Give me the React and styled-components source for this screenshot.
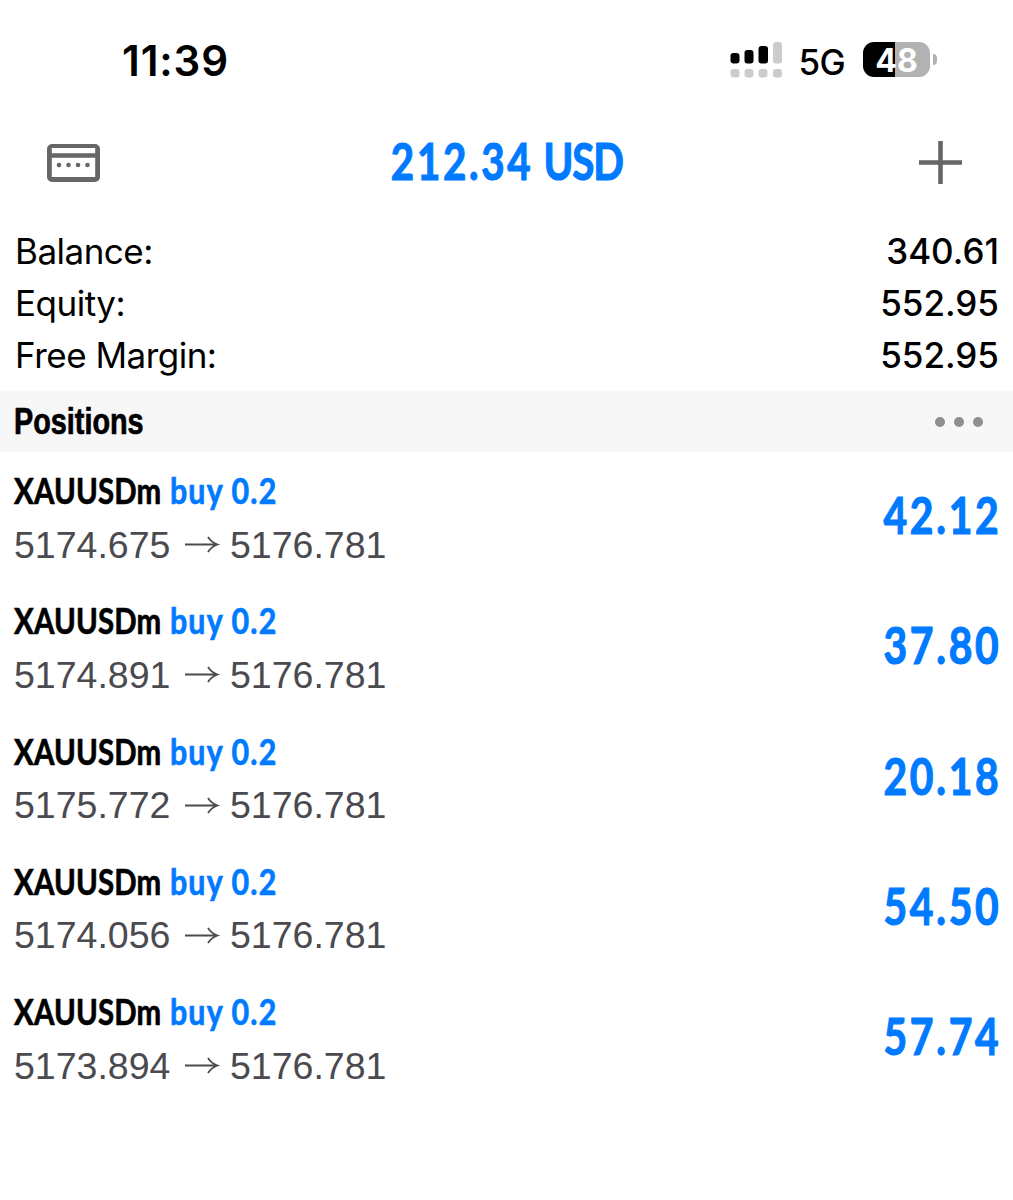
import styled, { createGlobalStyle } from 'styled-components';

const GlobalStyle = createGlobalStyle`
  * {
    box-sizing: border-box;
  }
  body {
    margin: 0;
    background: #fff;
    color: #000;
    font-family: Inter, "Liberation Sans", sans-serif;
  }
`

const Screen = styled.main`
  width: 1013px;
  height: 1200px;
  overflow: hidden;
  background: #fff;
`

const StatusBar = styled.header`
  display: flex;
  align-items: center;
  justify-content: space-between;
  height: 119px;
  padding: 0 76px 0 122px;
`
const Clock = styled.div`
  margin-top: 1px;
  font-size: 42px;
  font-weight: 600;
  letter-spacing: 0.9px;
`
const Indicators = styled.div`
  display: flex;
  align-items: center;
`
const Network = styled.span`
  margin: 4px 18px 0 16px;
  font-size: 35px;
  font-weight: 450;
  letter-spacing: -0.7px;
`
const Battery = styled.div`
  display: flex;
  align-items: center;
`
const BatteryBody = styled.div`
  width: 67px;
  height: 35px;
  border-radius: 11px;
  background: linear-gradient(to right, #000 ${props => props.$level}%, #b2b2b2 ${props => props.$level}%);
  color: #fff;
  font-size: 32px;
  font-weight: 700;
  line-height: 37px;
  text-align: center;
`
const BatteryCap = styled.div`
  width: 4px;
  height: 11px;
  margin-left: 3px;
  border-radius: 0 5px 5px 0;
  background: #b2b2b2;
`

const NavBar = styled.nav`
  display: flex;
  align-items: center;
  justify-content: space-between;
  height: 87px;
  padding: 0 51px 0 47px;
`
const NavButton = styled.button`
  display: flex;
  padding: 0;
  border: 0;
  background: none;
`

// Condensed lettering: the text is squeezed towards one edge of its box
const Condensed = styled.span`
  display: inline-block;
  font-family: Lato, sans-serif;
  font-weight: 700;
  white-space: nowrap;
  transform: scaleX(${props => props.$scale});
  transform-origin: ${props => props.$origin || 'left'} center;
`
const Total = styled(Condensed)`
  margin: 0 6px 5px 0;
  color: #007aff;
  font-size: 51px;
  letter-spacing: 3.4px;
  -webkit-text-stroke: 1.2px #007aff;
`
const Currency = styled.span`
  margin-left: -3px;
  letter-spacing: -1.4px;
`

const Summary = styled.section`
  height: 185px;
  padding: 19px 14px 0 15px;
`
const SummaryRow = styled.div`
  display: flex;
  align-items: center;
  justify-content: space-between;
  height: 52px;
  font-size: 35px;
`
const Label = styled.span`
  letter-spacing: -0.5px;
`
const Amount = styled.span`
  font-weight: 500;
`

const SectionBar = styled.div`
  display: flex;
  align-items: center;
  justify-content: space-between;
  height: 61px;
  padding: 0 30px 0 14px;
  background: #f7f7f7;
`
const SectionTitle = styled(Condensed)`
  font-family: "Liberation Sans", sans-serif;
  font-size: 36px;
  -webkit-text-stroke: 0.7px #000;
`
const Dots = styled.div`
  display: flex;
  gap: 9px;
`
const Dot = styled.i`
  width: 10px;
  height: 10px;
  border-radius: 50%;
  background: #8e8e93;
`

const Position = styled.article`
  display: flex;
  align-items: center;
  justify-content: space-between;
  height: 130.25px;
  padding: 0 14px;
`
const Deal = styled.div`
  display: flex;
  flex-direction: column;
`
const DealHead = styled.div`
  display: flex;
  height: 54px;
  line-height: 54px;
  font-size: 37px;
`
const SymbolBox = styled.div`
  width: 156px;
`
const SymbolName = styled(Condensed)`
  letter-spacing: 0.2px;
  -webkit-text-stroke: 0.7px #000;
`
const Side = styled(Condensed)`
  color: #007aff;
  letter-spacing: 1.4px;
  -webkit-text-stroke: 0.7px #007aff;
`
const Prices = styled.div`
  display: flex;
  align-items: center;
  height: 54px;
  padding-top: 2px;
  color: #4a4a4f;
  font-family: "Liberation Sans", sans-serif;
  font-size: 37.5px;
`
const Price = styled.span`
  width: ${props => props.$wide ? '170px' : 'auto'};
`
const Profit = styled(Condensed)`
  margin: 0 -2px 5px 0;
  color: #007aff;
  font-size: 51px;
  letter-spacing: 3.4px;
  -webkit-text-stroke: 1.2px #007aff;
`

const positions = [
  { id: 1, open: '5174.675', profit: '42.12' },
  { id: 2, open: '5174.891', profit: '37.80' },
  { id: 3, open: '5175.772', profit: '20.18' },
  { id: 4, open: '5174.056', profit: '54.50' },
  { id: 5, open: '5173.894', profit: '57.74' },
]

const summary = [
  ['Balance:', '340.61'],
  ['Equity:', '552.95'],
  ['Free Margin:', '552.95'],
]

const Signal = () => (
  <svg width="53" height="36" viewBox="0 0 53 36">
    <rect x="0.5" y="11" width="9" height="10.5" rx="3" />
    <rect x="14.5" y="8" width="9" height="13.5" rx="3" />
    <rect x="28.5" y="4" width="9.5" height="17.5" rx="3" />
    <g fill="#ccc">
      <rect x="43" y="0" width="9" height="21.5" rx="3" />
      <rect x="0.5" y="27" width="9" height="8.5" rx="3" />
      <rect x="14.5" y="27" width="9" height="8.5" rx="3" />
      <rect x="28.5" y="27" width="9" height="8.5" rx="3" />
      <rect x="43" y="27" width="9" height="8.5" rx="3" />
    </g>
  </svg>
)

const PanelIcon = () => (
  <svg width="53" height="38" viewBox="0 0 53 38" fill="#666">
    <path fillRule="evenodd" d="M5 0h43a5 5 0 0 1 5 5v28a5 5 0 0 1-5 5H5a5 5 0 0 1-5-5V5a5 5 0 0 1 5-5zM4.8 4v5.3h43.4V4zM4.8 13.8v19.2h43.4V13.8z" />
    <circle cx="12" cy="21" r="2.3" />
    <circle cx="21.5" cy="21" r="2.3" />
    <circle cx="31" cy="21" r="2.3" />
    <circle cx="40.5" cy="21" r="2.3" />
  </svg>
)

const PlusIcon = () => (
  <svg width="43" height="43" viewBox="0 0 43 43" stroke="#666" strokeWidth="4.6">
    <path d="M21.5 0v43M0 21.5h43" />
  </svg>
)

const Arrow = () => (
  <svg width="46" height="20" viewBox="0 0 46 20" fill="none" stroke="#4a4a4f" strokeWidth="1.8">
    <path d="M1 9.5H33.5M24 2Q27.5 7.5 33.5 9.5Q27.5 11.5 24 17" />
  </svg>
)

const App = () => {
  return (
    <Screen>
      <GlobalStyle />
      <StatusBar>
        <Clock>11:39</Clock>
        <Indicators>
          <Signal />
          <Network>5G</Network>
          <Battery>
            <BatteryBody $level={48}>48</BatteryBody>
            <BatteryCap />
          </Battery>
        </Indicators>
      </StatusBar>
      <NavBar>
        <NavButton><PanelIcon /></NavButton>
        <Total $scale={0.79} $origin="center">212.34 <Currency>USD</Currency></Total>
        <NavButton><PlusIcon /></NavButton>
      </NavBar>
      <Summary>
        {summary.map(([label, amount]) => (
          <SummaryRow key={label}>
            <Label>{label}</Label>
            <Amount>{amount}</Amount>
          </SummaryRow>
        ))}
      </Summary>
      <SectionBar>
        <SectionTitle $scale={0.8}>Positions</SectionTitle>
        <Dots><Dot /><Dot /><Dot /></Dots>
      </SectionBar>
      {positions.map(item => (
        <Position key={item.id}>
          <Deal>
            <DealHead>
              <SymbolBox><SymbolName $scale={0.795}>XAUUSDm</SymbolName></SymbolBox>
              <Side $scale={0.82}>buy 0.2</Side>
            </DealHead>
            <Prices>
              <Price $wide>{item.open}</Price>
              <Arrow />
              <Price>5176.781</Price>
            </Prices>
          </Deal>
          <Profit $scale={0.8} $origin="right">{item.profit}</Profit>
        </Position>
      ))}
    </Screen>
  )
}

export default App
